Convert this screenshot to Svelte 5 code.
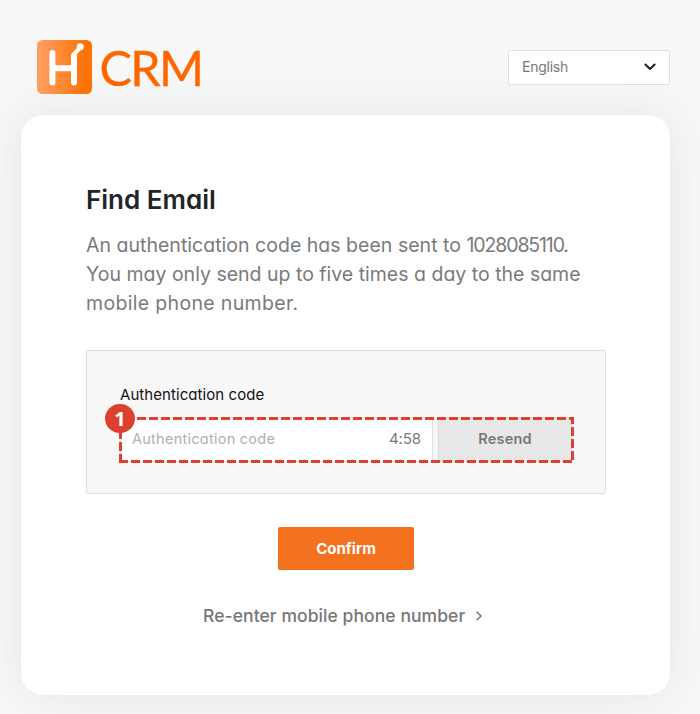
<script>
  let code = $state('');
  const message = [
    [
      { text: 'An authentication code has been sent to ', track: 0.02 },
      { text: '1028085110.', track: -1.12 }
    ],
    [{ text: 'You may only send up to five times a day to the same', track: 0 }],
    [{ text: 'mobile phone number.', track: 0.33 }]
  ];
</script>

<div class="page">
  <header>
    <div class="logo">
      <svg class="mark" width="56" height="56" viewBox="0 0 56 56" aria-hidden="true">
        <defs>
          <linearGradient id="tile" x1="0" y1="0" x2="1" y2="0">
            <stop offset="0" stop-color="#ff9f66" />
            <stop offset="0.85" stop-color="#ff7408" />
            <stop offset="1" stop-color="#ff7200" />
          </linearGradient>
        </defs>
        <rect x="1" y="1" width="55" height="54" rx="5.5" fill="url(#tile)" />
        <g fill="none" stroke="#fff" stroke-width="6" stroke-linecap="round" stroke-linejoin="round">
          <path d="M16.400 14v29.500M16.400 29.300H38M38 43.500V17" />
          <path d="M37.500 15.500L42.500 10.500" stroke-width="4" />
        </g>
        <circle cx="44.200" cy="7.800" r="3.500" fill="#fff" />
      </svg>
      <span class="brand">CRM</span>
    </div>
    <button class="language" type="button">
      <span>English</span>
      <svg width="14" height="10" viewBox="0 0 14 10" aria-hidden="true">
        <path d="M2.400 2.500L7 7L11.600 2.500" fill="none" stroke="#212529" stroke-width="2.100" stroke-linecap="round" stroke-linejoin="round" />
      </svg>
    </button>
  </header>

  <main>
    <h1>Find Email</h1>
    <p>
      {#each message as line}
        <span class="line">{#each line as part}<span style:letter-spacing="{part.track}px">{part.text}</span>{/each}</span>
      {/each}
    </p>

    <section>
      <label for="code">Authentication code</label>
      <div class="row">
        <div class="field">
          <input id="code" placeholder="Authentication code" bind:value={code} />
          <span class="timer">4:58</span>
        </div>
        <button class="resend" type="button">Resend</button>
        <svg class="outline" width="456" height="47" aria-hidden="true">
          <g stroke="#de402f" stroke-width="3" stroke-dasharray="9 3">
            <path d="M6 1.500H455" />
            <path d="M0 44.500H455" />
            <path d="M1.500 46V0" />
            <path d="M453.500 0V46" stroke-dashoffset="2" />
          </g>
        </svg>
        <span class="badge">1</span>
      </div>
    </section>

    <button class="confirm" type="button">Confirm</button>
    <button class="back" type="button">
      <span>Re-enter mobile phone number</span>
      <svg width="8" height="12" viewBox="0 0 8 12" aria-hidden="true">
        <path d="M1.500 1.800L6 6L1.500 10.200" fill="none" stroke="#777" stroke-width="1.500" />
      </svg>
    </button>
  </main>
</div>

<style>
  :global(body) { margin: 0; background: #f8f8f8; }
  .page {
    box-sizing: border-box;
    width: 700px;
    height: 714px;
    padding: 38px 30px 0 21px;
    overflow: hidden;
    background: #f8f8f8;
    font-family: Inter, "Noto Sans", sans-serif;
    font-feature-settings: "cv11";
    color: #7a7a7a;
  }
  button, input { font: inherit; font-feature-settings: inherit; }
  header {
    position: relative;
    z-index: 1;
    display: flex;
    justify-content: space-between;
    height: 77px;
    padding-left: 15px;
  }
  .logo { display: flex; height: 57px; }
  .brand {
    margin-left: 7.5px;
    font: 400 48.5px/58px Lato, "Open Sans", sans-serif;
    letter-spacing: -1.7px;
    color: #ff6600;
    -webkit-text-stroke: 0.4px #ff6600;
  }
  .mark { margin-top: 1px; }
  .language {
    display: flex;
    align-items: center;
    justify-content: space-between;
    box-sizing: border-box;
    width: 162px;
    height: 35px;
    margin-top: 12px;
    padding: 0 12px 2px 13px;
    border: 1px solid #dce0e5;
    border-radius: 2px;
    background: #fff;
    color: #777;
    font-size: 14px;
    letter-spacing: -0.25px;
  }
  main {
    display: flex;
    flex-direction: column;
    box-sizing: border-box;
    height: 580px;
    padding: 65px 64px 0 65px;
    border-radius: 22px;
    background: #fff;
    box-shadow: 0 0 50px rgba(40, 60, 100, 0.11);
  }
  h1 {
    margin: 0;
    font-size: 26px;
    line-height: 39px;
    font-weight: 600;
    letter-spacing: 0;
    color: #212529;
  }
  p { margin: 12px 0 0; font-size: 19.5px; line-height: 29px; }
  .line { display: block; white-space: pre; }
  section {
    box-sizing: border-box;
    height: 144px;
    margin-top: 32px;
    padding: 33px 32px 0 33px;
    border: 1px solid #dce0e4;
    border-radius: 2px;
    background: #f8f8f8;
  }
  label {
    display: block;
    height: 33px;
    font-size: 15px;
    line-height: 22px;
    letter-spacing: 0.07px;
    color: #111;
  }
  .row { position: relative; display: flex; gap: 5px; width: 452px; height: 45px; }
  .field {
    display: flex;
    align-items: center;
    box-sizing: border-box;
    width: 313px;
    padding: 0 11px 2px 11px;
    border: 1px solid #dce0e4;
    background: #fff;
  }
  input {
    flex: 1;
    min-width: 0;
    padding: 0;
    border: 0;
    outline: 0;
    background: none;
    font-size: 14.5px;
    letter-spacing: 0.26px;
  }
  input::placeholder { color: #b1b1b1; opacity: 1; }
  .timer { font-size: 15px; letter-spacing: -0.1px; }
  .resend {
    flex: 1;
    padding: 0 0 2px 0;
    border: 1px solid #d8dce0;
    background: #e8e8e8;
    color: #777;
    font-size: 14.5px;
    font-weight: 600;
    letter-spacing: 0.2px;
  }
  .outline { position: absolute; left: -1px; top: 0; fill: none; }
  .badge {
    position: absolute;
    left: -15px;
    top: -13px;
    width: 30px;
    height: 29px;
    border-radius: 50%;
    background: #de402f;
    color: #fff;
    font: 700 20px/29px "Noto Sans", sans-serif;
    text-align: center;
  }
  .confirm {
    align-self: center;
    width: 136px;
    height: 43px;
    margin-top: 33px;
    padding: 0;
    border: 0;
    border-radius: 2px;
    background: #f47120;
    color: #fff;
    font-size: 15px;
    font-weight: 700;
    letter-spacing: 0;
  }
  .back {
    display: flex;
    align-items: center;
    align-self: flex-start;
    height: 26px;
    margin: 32px 0 0 117px;
    padding: 0;
    gap: 10px;
    border: 0;
    background: none;
    color: #777;
    font-size: 17.5px;
    font-weight: 500;
    letter-spacing: 0.07px;
    white-space: nowrap;
  }
  .back svg { margin-top: 1px; }
</style>
